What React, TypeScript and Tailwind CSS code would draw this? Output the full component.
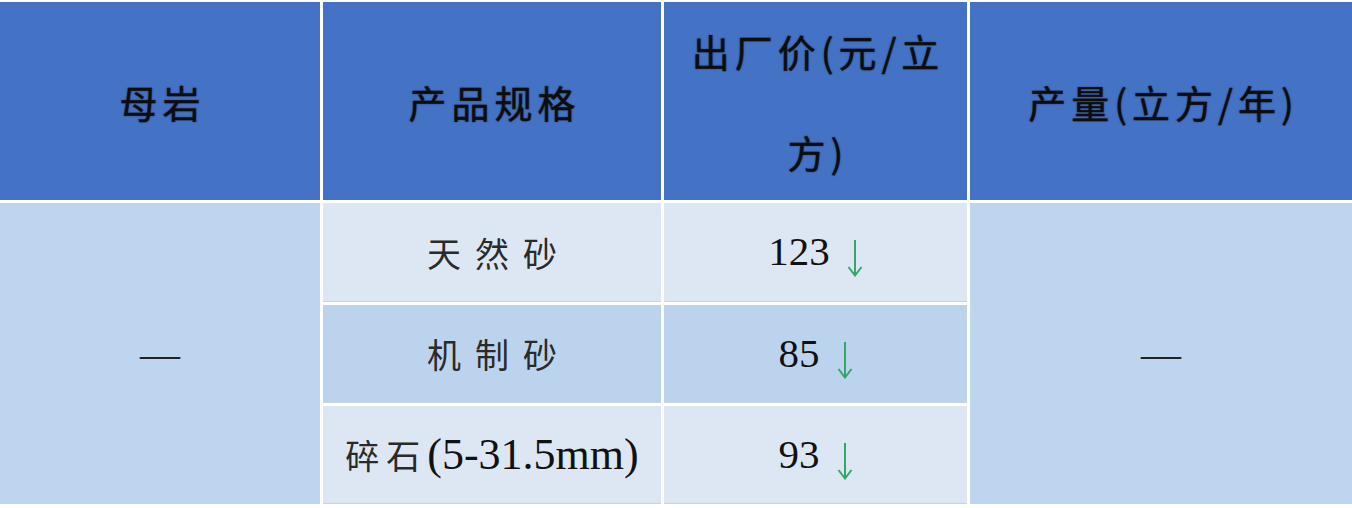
const headFont = { fontFamily: '"Noto Sans CJK SC", "Noto Sans", sans-serif' };

function DownArrow() {
  return (
    <svg width="16" height="38" viewBox="0 0 16 38" className="mt-3 shrink-0" aria-hidden>
      <path d="M8 1 V36" stroke="#33a866" strokeWidth="2" fill="none" />
      <path d="M1.5 28 L8 36.5 L14.5 28" stroke="#33a866" strokeWidth="2" fill="none" strokeLinejoin="miter" />
    </svg>
  );
}

const rows = [
  { name: "天然砂", price: "123", tone: "bg-[#dde7f4]", tracking: 14 },
  { name: "机制砂", price: "85", tone: "bg-[#bcd3ee]", tracking: 14 },
  { name: "碎石", unit: "(5-31.5mm)", price: "93", tone: "bg-[#dde7f4]", tracking: 7 },
];

const headCell =
  "flex items-center justify-center bg-[#4472c4] text-[38px] font-normal tracking-[5px] text-[#0d0d0d] [-webkit-text-stroke:0.35px_#0d0d0d] [text-shadow:0_0_2px_rgba(0,0,0,0.5)]";

export default function App() {
  return (
    <div className="h-[508px] w-[1352px] overflow-hidden bg-white pt-[2px]">
      <div className="grid grid-cols-[320px_338px_303px_382px] grid-rows-[198px_99px_98px_98px] gap-[3px]">
        {["母岩", "产品规格"].map((t) => (
          <div key={t} style={headFont} className={headCell}>
            <span className="pl-[5px]">{t}</span>
          </div>
        ))}
        <div style={headFont} className={`${headCell} text-center leading-[101px]`}>
          <span className="pl-[5px]">
            出厂价(元/立
            <br />
            方)
          </span>
        </div>
        <div style={headFont} className={headCell}>
          <span className="pl-[5px]">产量(立方/年)</span>
        </div>

        <div className="row-span-3 row-start-2 flex items-center justify-center bg-[#bdd5ef] font-['Liberation_Serif',serif] text-[40px] text-[#222]">
          —
        </div>

        {rows.map((r, i) => (
          <div key={r.name} className="contents">
            <div
              className={`col-start-2 flex items-center justify-center border-b border-[#c3d3ea] ${r.tone} text-[#2a2a2a]`}
              style={{ gridRowStart: i + 2 }}
            >
              <span
                className="text-[34px] font-normal"
                style={{ ...headFont, letterSpacing: r.tracking, paddingLeft: r.unit ? 0 : r.tracking }}
              >
                {r.name}
              </span>
              {r.unit && (
                <span className="font-['Liberation_Serif',serif] text-[44px] text-[#111]">{r.unit}</span>
              )}
            </div>
            <div
              className={`col-start-3 flex items-center justify-center gap-[17px] border-b border-[#c3d3ea] ${r.tone}`}
              style={{ gridRowStart: i + 2 }}
            >
              <span className="font-['Liberation_Serif',serif] text-[41px] text-[#111]">{r.price}</span>
              <DownArrow />
            </div>
          </div>
        ))}

        <div className="col-start-4 row-span-3 row-start-2 flex items-center justify-center bg-[#bdd5ef] font-['Liberation_Serif',serif] text-[40px] text-[#222]">
          —
        </div>
      </div>
    </div>
  );
}
